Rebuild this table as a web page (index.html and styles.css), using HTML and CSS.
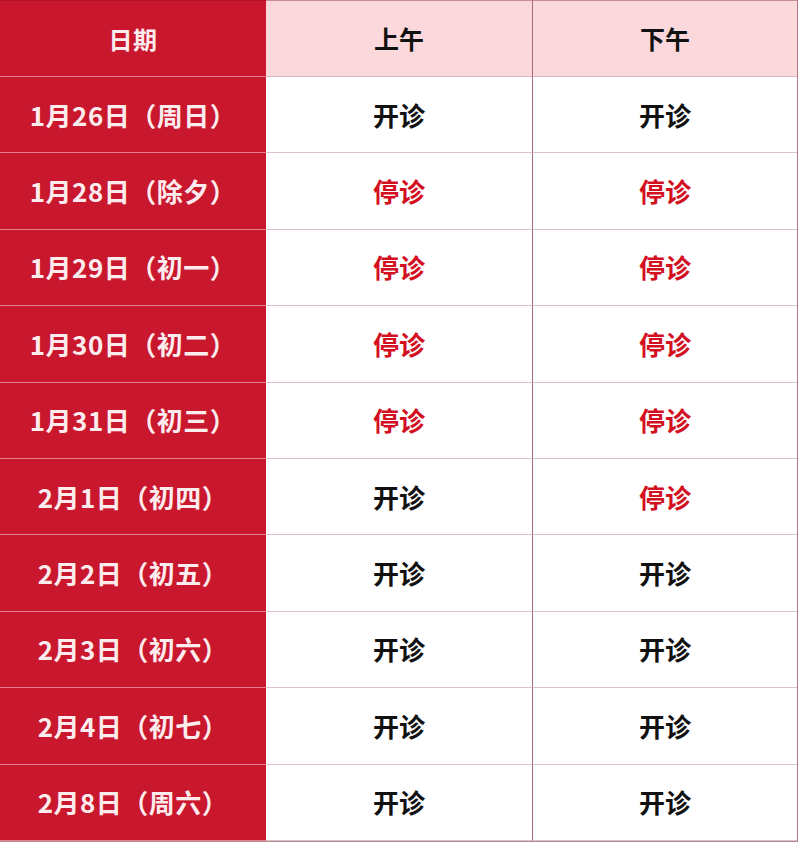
FILE: index.html
```html
<!DOCTYPE html>
<html lang="zh-CN">
<head>
<meta charset="utf-8">
<title>春节门诊安排</title>
<link rel="stylesheet" href="styles.css">
</head>
<body>
<div class="table">
  <div class="cell date head">日期</div>
  <div class="cell am head-w">上午</div>
  <div class="cell pm head-w">下午</div>

  <div class="cell date">1月26日（周日）</div>
  <div class="cell am">开诊</div>
  <div class="cell pm">开诊</div>

  <div class="cell date">1月28日（除夕）</div>
  <div class="cell am stop">停诊</div>
  <div class="cell pm stop">停诊</div>

  <div class="cell date">1月29日（初一）</div>
  <div class="cell am stop">停诊</div>
  <div class="cell pm stop">停诊</div>

  <div class="cell date">1月30日（初二）</div>
  <div class="cell am stop">停诊</div>
  <div class="cell pm stop">停诊</div>

  <div class="cell date">1月31日（初三）</div>
  <div class="cell am stop">停诊</div>
  <div class="cell pm stop">停诊</div>

  <div class="cell date">2月1日（初四）</div>
  <div class="cell am">开诊</div>
  <div class="cell pm stop">停诊</div>

  <div class="cell date">2月2日（初五）</div>
  <div class="cell am">开诊</div>
  <div class="cell pm">开诊</div>

  <div class="cell date">2月3日（初六）</div>
  <div class="cell am">开诊</div>
  <div class="cell pm">开诊</div>

  <div class="cell date">2月4日（初七）</div>
  <div class="cell am">开诊</div>
  <div class="cell pm">开诊</div>

  <div class="cell date">2月8日（周六）</div>
  <div class="cell am">开诊</div>
  <div class="cell pm">开诊</div>
</div>
</body>
</html>
```
FILE: styles.css
```css
html, body {
  margin: 0;
  padding: 0;
  background: #ffffff;
}
body {
  width: 800px;
  height: 842px;
  overflow: hidden;
  font-family: "Noto Sans CJK SC", "Noto Sans", sans-serif;
}
.table {
  width: 798px;
  height: 842px;
  display: grid;
  grid-template-columns: 266px 267px 264px;
  grid-template-rows: 77px repeat(10, 1fr);
  border-right: 1px solid #b07a84;
  border-bottom: 1px solid #b88a92;
  box-sizing: border-box;
}
.cell {
  display: flex;
  align-items: center;
  justify-content: center;
  font-weight: 700;
  font-size: 26px;
  line-height: 1;
  color: #111111;
  border-bottom: 1px solid #d9c3c7;
  box-sizing: border-box;
}
.date {
  background: #c9172e;
  color: #fdecee;
  border-bottom: 1px solid #e6828f;
  font-size: 26px;
  letter-spacing: 0.5px;
}
.head {
  font-size: 24px;
  border-top: 1px solid #b5122a;
}
.head-w {
  background: #fad8dc;
  font-size: 25px;
  border-top: 1px solid #c88a93;
  border-bottom: 1px solid #d9b3b9;
}
.am {
  border-right: 1px solid #a86a74;
}
.stop {
  color: #d3101f;
}
```
